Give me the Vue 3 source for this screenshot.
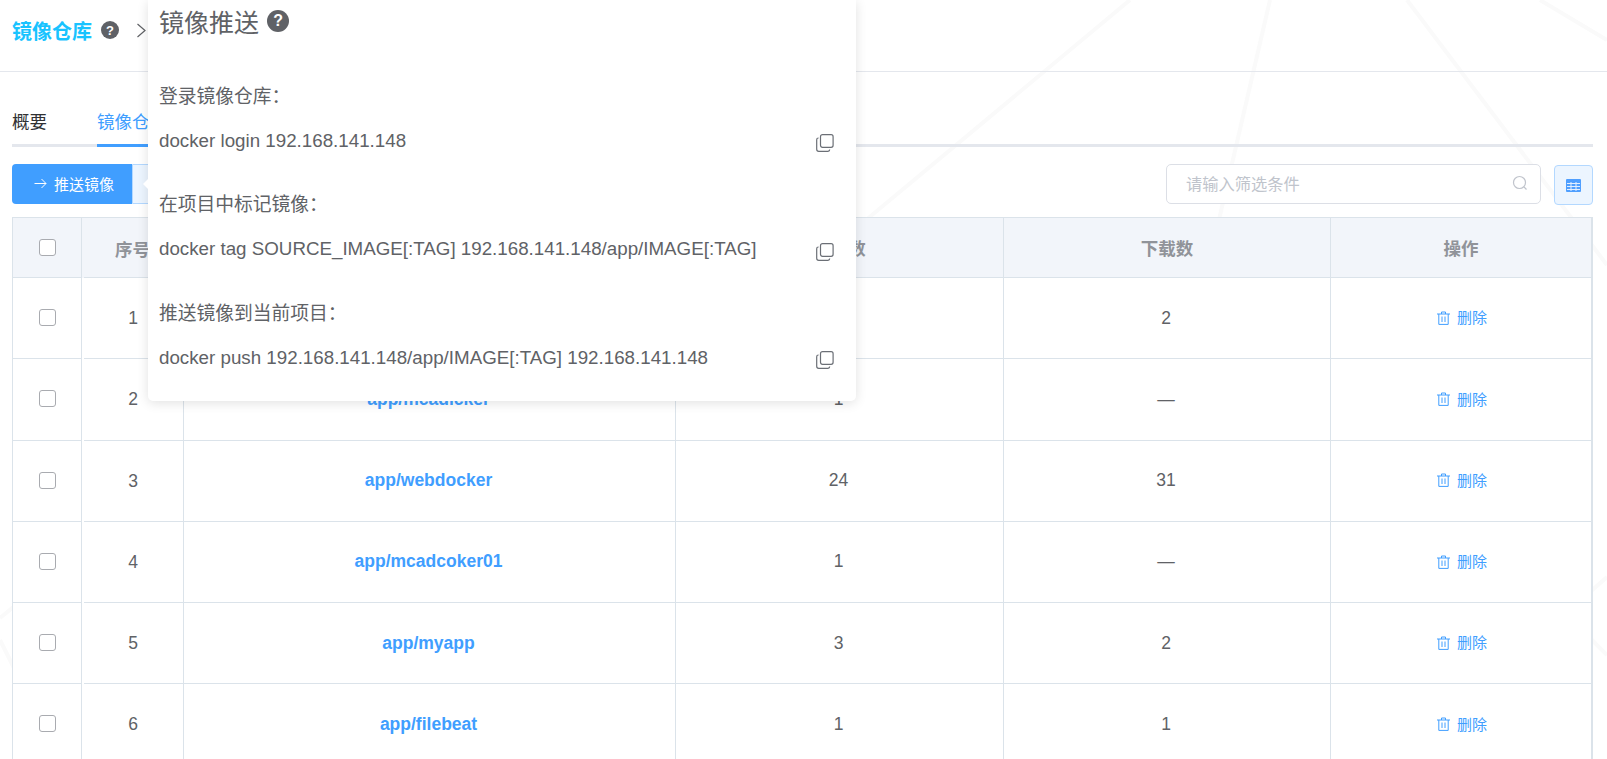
<script setup>
const rows = [
  { id: 1, name: 'app/nginx', tags: '1', pulls: '2' },
  { id: 2, name: 'app/mcadicker', tags: '1', pulls: '—' },
  { id: 3, name: 'app/webdocker', tags: '24', pulls: '31' },
  { id: 4, name: 'app/mcadcoker01', tags: '1', pulls: '—' },
  { id: 5, name: 'app/myapp', tags: '3', pulls: '2' },
  { id: 6, name: 'app/filebeat', tags: '1', pulls: '1' }
]
const groups = [
  { label: '登录镜像仓库：', cmd: 'docker login 192.168.141.148' },
  { label: '在项目中标记镜像：', cmd: 'docker tag SOURCE_IMAGE[:TAG] 192.168.141.148/app/IMAGE[:TAG]' },
  { label: '推送镜像到当前项目：', cmd: 'docker push 192.168.141.148/app/IMAGE[:TAG] 192.168.141.148' }
]
const lines = [
  [1130, 0, 860, 225], [1270, 0, 1205, 280], [1407, 0, 1607, 265], [1540, 0, 1607, 40],
  [0, 618, 40, 585], [0, 640, 30, 700], [1590, 592, 1607, 577], [1590, 638, 1607, 655]
]
</script>

<template>
  <div class="page">
    <svg class="bg" width="1607" height="759" viewBox="0 0 1607 759" aria-hidden="true">
      <line v-for="(l, i) in lines" :key="i" :x1="l[0]" :y1="l[1]" :x2="l[2]" :y2="l[3]" stroke="#fafafa" stroke-width="4" />
    </svg>

    <header class="head">
      <span class="crumb">镜像仓库</span>
      <span class="help small">?</span>
      <svg class="chev" width="11" height="15" viewBox="0 0 11 15"><path d="M1.5 1 L9 7.5 L1.5 14" fill="none" stroke="#606266" stroke-width="1.2" /></svg>
    </header>

    <nav class="tabs">
      <span class="tab">概要</span>
      <span class="tab active">镜像仓库</span>
    </nav>

    <div class="toolbar">
      <button class="btn primary">
        <svg width="13" height="11" viewBox="0 0 13 11"><path d="M0.5 5.5 H12 M7.5 1 L12 5.5 L7.5 10" fill="none" stroke="#fff" stroke-width="1" /></svg>
        推送镜像
      </button>
      <button class="btn plain">批量删除</button>
      <div class="search">
        <span class="placeholder">请输入筛选条件</span>
        <svg width="16" height="16" viewBox="0 0 16 16"><circle cx="7.5" cy="7.5" r="6" fill="none" stroke="#c0c4cc" stroke-width="1.2" /><path d="M12 12 L14.5 14.5" stroke="#c0c4cc" stroke-width="1.2" /></svg>
      </div>
      <button class="grid-btn" aria-label="列">
        <svg width="15" height="13" viewBox="0 0 15 13">
          <rect x="0" y="0" width="15" height="13" rx="1" fill="#4f9fff" />
          <path d="M1 4.5 H14 M1 7.5 H14 M1 10.5 H14 M5 3 V12 M10 3 V12" stroke="#e3efff" stroke-width="1" />
        </svg>
      </button>
    </div>

    <table class="table">
      <colgroup>
        <col class="c1" /><col class="c2" /><col class="c3" /><col class="c4" /><col class="c5" /><col class="c6" />
      </colgroup>
      <thead>
        <tr>
          <th><span class="check"></span></th>
          <th>序号</th>
          <th>镜像名称</th>
          <th>标签数</th>
          <th>下载数</th>
          <th>操作</th>
        </tr>
      </thead>
      <tbody>
        <tr v-for="r in rows" :key="r.id">
          <td><span class="check"></span></td>
          <td>{{ r.id }}</td>
          <td class="name">{{ r.name }}</td>
          <td>{{ r.tags }}</td>
          <td>{{ r.pulls }}</td>
          <td>
            <span class="del">
              <svg width="13" height="14" viewBox="0 0 13 14"><path d="M0 3 H13 M4.5 3 V1 H8.5 V3 M1.8 3 V13.4 H11.2 V3 M5 5.5 V11 M8 5.5 V11" fill="none" stroke="#409eff" stroke-width="1" /></svg>
              删除
            </span>
          </td>
        </tr>
      </tbody>
    </table>

    <aside class="pop">
      <i class="arrow"></i>
      <h3 class="pop-title">镜像推送 <span class="help">?</span></h3>
      <div v-for="g in groups" :key="g.label" class="group">
        <div class="label">{{ g.label }}</div>
        <div class="cmd">
          <span>{{ g.cmd }}</span>
          <svg class="copy" width="18" height="18" viewBox="0 0 18 18">
            <rect x="4.5" y="0.7" width="12.6" height="12.6" rx="2" fill="none" stroke="#6b6f76" stroke-width="1.2" />
            <path d="M2.6 4 H2.4 A1.7 1.7 0 0 0 0.7 5.7 V15.3 A2 2 0 0 0 2.7 17.3 H12 A1.7 1.7 0 0 0 13.7 15.6" fill="none" stroke="#6b6f76" stroke-width="1.2" />
          </svg>
        </div>
      </div>
    </aside>
  </div>
</template>

<style>
html, body { margin: 0; overflow: hidden; background: #fff; }
</style>

<style scoped>
.page {
  position: relative;
  width: 1607px;
  height: 759px;
  overflow: hidden;
  background: #fff;
  padding: 0 14px 0 12px;
  box-sizing: border-box;
  font-family: "Liberation Sans", "Noto Sans CJK SC", sans-serif;
  color: #606266;
}
.bg { position: absolute; left: 0; top: 0; }
.head {
  position: relative;
  margin: 0 -14px 0 -12px;
  padding-left: 12px;
  height: 71px;
  box-sizing: border-box;
  display: flex;
  align-items: center;
  padding-bottom: 11px;
  box-shadow: 0 1px 0 #e4e7ed;
}
.crumb { font-size: 20px; font-weight: 700; color: #19c3ff; }
.help {
  display: inline-flex;
  align-items: center;
  justify-content: center;
  width: 22px;
  height: 22px;
  border-radius: 50%;
  background: #5f6166;
  color: #fff;
  font-size: 16px;
  font-weight: 700;
  font-family: "Liberation Sans", sans-serif;
}
.help.small { width: 18px; height: 18px; font-size: 13px; margin-left: 9px; }
.chev { margin-left: 17px; }
.tabs {
  position: relative;
  display: flex;
  gap: 50px;
  margin-top: 30px;
  height: 46px;
  box-sizing: border-box;
  border-bottom: 3px solid #e4e7ed;
}
.tab { font-size: 17.5px; line-height: 42px; height: 46px; box-sizing: border-box; color: #303133; }
.tab.active { color: #409eff; border-bottom: 3px solid #409eff; }
.toolbar {
  position: relative;
  display: flex;
  align-items: flex-start;
  margin-top: 17px;
  height: 40px;
}
.btn {
  height: 40px;
  border: 0;
  padding: 0;
  font: inherit;
  font-size: 15px;
  box-sizing: border-box;
}
.btn.primary {
  width: 120px;
  padding: 0 0 2px 22px;
  background: #409eff;
  color: #fff;
  border-radius: 4px 0 0 4px;
  display: flex;
  align-items: center;
  gap: 7px;
}
.btn.plain {
  width: 120px;
  background: #ecf5ff;
  color: #409eff;
  border: 1px solid #b3d8ff;
  border-radius: 0 4px 4px 0;
}
.search {
  margin-left: auto;
  width: 375px;
  height: 40px;
  box-sizing: border-box;
  background: #fff;
  border: 1px solid #dcdfe6;
  border-radius: 5px;
  display: flex;
  align-items: center;
  justify-content: space-between;
  padding: 0 12px 2px 19px;
}
.placeholder { font-size: 16.25px; color: #c0c4cc; }
.grid-btn {
  margin: 1px 0 0 13px;
  width: 39px;
  height: 40px;
  box-sizing: border-box;
  padding: 0;
  background: #ecf5ff;
  border: 1px solid #b3d8ff;
  border-radius: 4px;
  display: flex;
  align-items: center;
  justify-content: center;
}
.table {
  position: relative;
  margin-top: 13px;
  width: 1581px;
  table-layout: fixed;
  border-collapse: separate;
  border-spacing: 0;
  background: #fff;
  border-top: 1px solid #dbe3ea;
  border-left: 1px solid #dbe3ea;
  border-right: 2px solid #dbe3ea;
  box-sizing: border-box;
}
.c1 { width: 69px; }
.c2 { width: 102px; }
.c3 { width: 492px; }
.c4 { width: 328px; }
.c5 { width: 327px; }
.c6 { width: 260px; }
th, td {
  padding: 0;
  text-align: center;
  border-right: 1px solid #dbe3ea;
  border-bottom: 1px solid #dbe3ea;
  box-sizing: border-box;
}
th:last-child, td:last-child { border-right: 0; }
th {
  height: 60px;
  background: #f2f5fa;
  font-size: 17.5px;
  font-weight: 700;
  color: #909399;
}
td { height: 81.25px; font-size: 17.5px; background: #fff; }
td:nth-child(2) { padding-left: 1px; }
td:nth-child(3), td:nth-child(4), td:nth-child(5) { padding-right: 2px; }
td:last-child { padding-left: 2px; }
th:nth-child(2), td:nth-child(2) { position: relative; border-bottom: 0; }
th:nth-child(2)::after, td:nth-child(2)::after {
  content: "";
  position: absolute;
  left: 2px;
  right: 0;
  bottom: 0;
  height: 1px;
  background: #dbe3ea;
}
.check {
  display: block;
  margin: 0 auto 1px;
  width: 17px;
  height: 17px;
  box-sizing: border-box;
  background: #fff;
  border: 1px solid #a9abb0;
  border-radius: 3px;
}
.name { color: #409eff; font-weight: 700; }
.del {
  display: inline-flex;
  align-items: center;
  gap: 7px;
  font-size: 15px;
  color: #409eff;
}
.del svg { margin-top: 2px; }
.pop {
  position: absolute;
  left: 148px;
  top: 0;
  width: 708px;
  height: 401px;
  box-sizing: border-box;
  background: #fff;
  border-radius: 0 0 5px 5px;
  box-shadow: 0 2px 12px rgba(0, 0, 0, 0.12);
  padding: 0 22px 0 11px;
}
.arrow {
  position: absolute;
  left: -5px;
  top: 179px;
  width: 0;
  height: 0;
  border-top: 5px solid transparent;
  border-bottom: 5px solid transparent;
  border-right: 5px solid #fff;
}
.pop-title {
  margin: 0 0 32.5px;
  height: 42px;
  display: flex;
  align-items: center;
  gap: 8px;
  font-size: 25px;
  font-weight: 400;
  color: #606266;
}
.group { margin-bottom: 20.5px; }
.label { font-size: 18.75px; line-height: 44px; height: 44px; }
.cmd {
  display: flex;
  align-items: center;
  justify-content: space-between;
  font-size: 18.75px;
  line-height: 44px;
  height: 44px;
}
.copy { margin-top: 5px; }
</style>
